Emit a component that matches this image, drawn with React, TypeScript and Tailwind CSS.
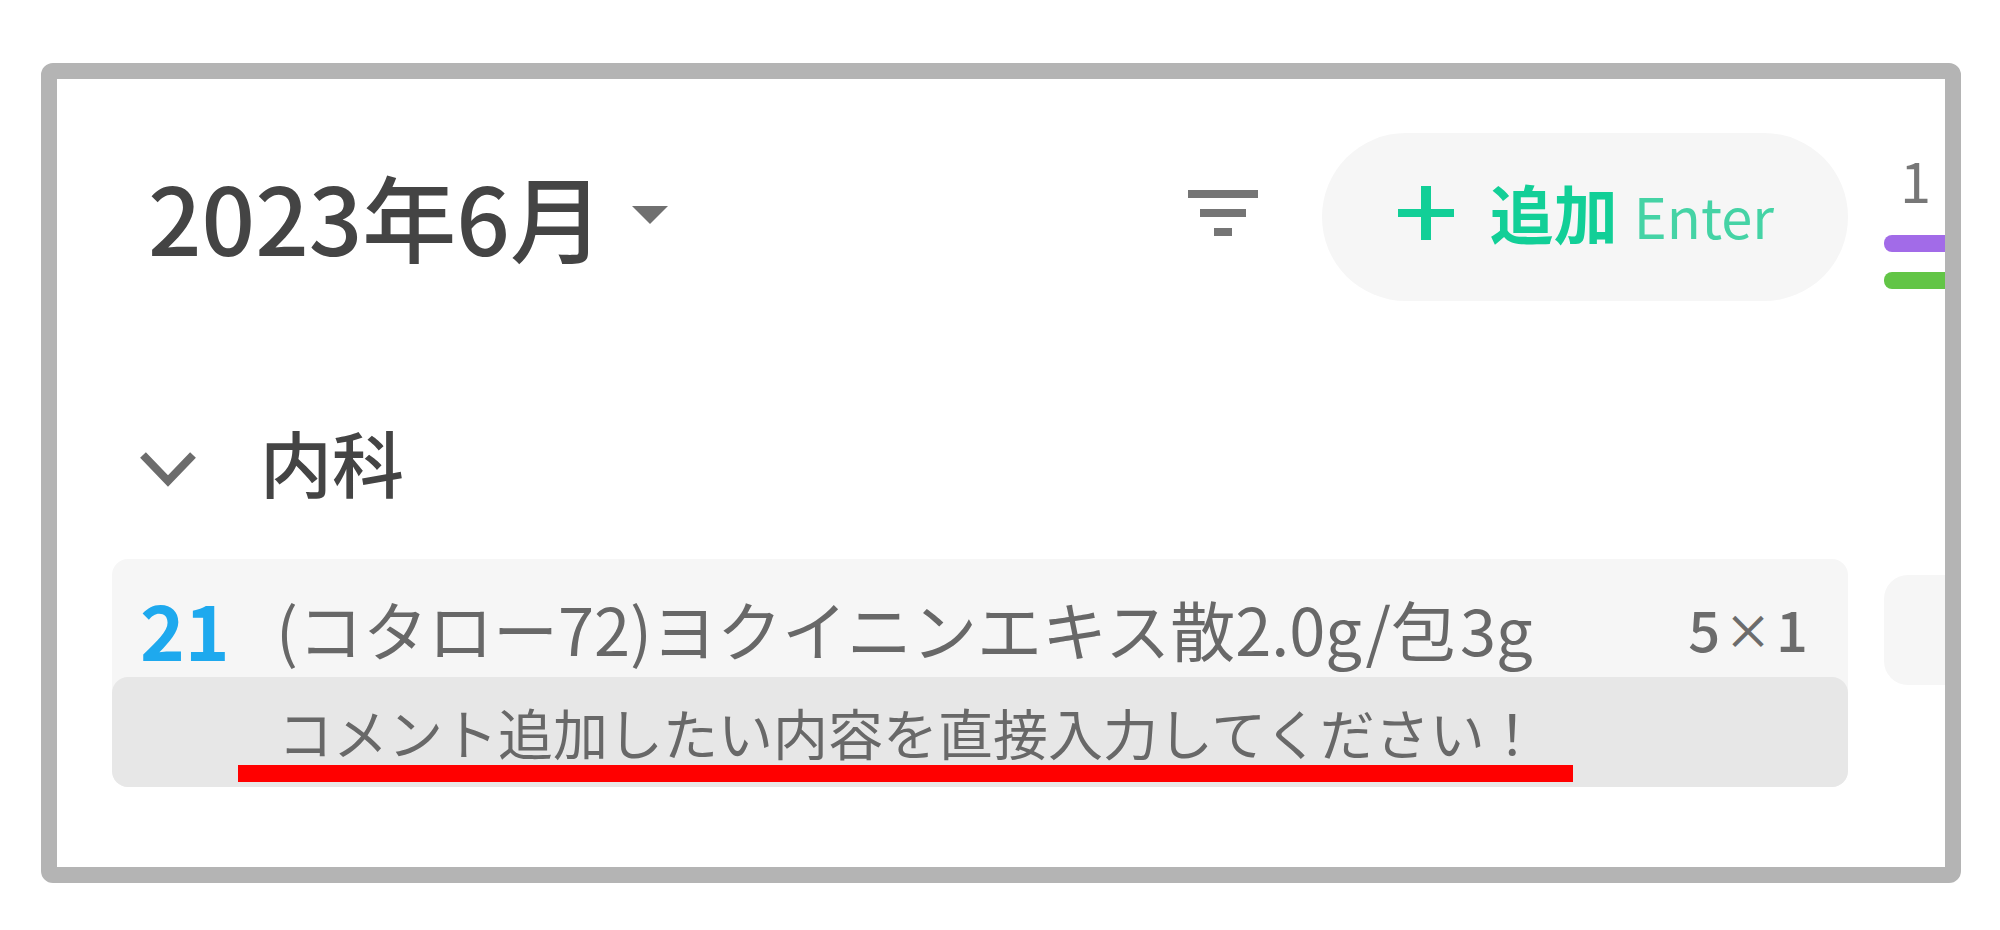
import React, { useState } from 'react';

const months = ['2023年6月', '2023年5月', '2023年4月'];

function FilterIcon() {
  return (
    <svg width="70" height="48" viewBox="0 0 70 48" fill="#757575" aria-hidden="true">
      <rect x="0" y="1" width="70" height="8" />
      <rect x="12" y="20" width="46" height="8" />
      <rect x="26" y="39" width="18" height="8" />
    </svg>
  );
}

function PlusIcon() {
  return (
    <svg width="56" height="56" viewBox="0 0 56 56" fill="#12cf97" aria-hidden="true">
      <rect x="23" y="1" width="10" height="54" />
      <rect x="0" y="24" width="56" height="8" />
    </svg>
  );
}

function Header() {
  const [month, setMonth] = useState(months[0]);

  return (
    <header className="flex h-[168px] items-center">
      <label className="flex items-center gap-7 pb-1 pl-9">
        <select
          aria-label="診療月"
          value={month}
          onChange={(e) => setMonth(e.target.value)}
          className="h-32 appearance-none bg-transparent text-[94px] leading-[128px] font-medium text-[#444] outline-none"
        >
          {months.map((m) => (
            <option key={m}>{m}</option>
          ))}
        </select>
        <svg width="36" height="18" viewBox="0 0 36 18" fill="#707070" aria-hidden="true">
          <path d="M0 0h36L18 18z" />
        </svg>
      </label>

      <div className="ml-auto flex items-center gap-16">
        <button aria-label="絞り込み" className="pb-2">
          <FilterIcon />
        </button>
        <button className="flex h-[168px] items-center rounded-full bg-[#f6f6f6] pr-[74px] pb-2 pl-[76px] text-[#12cf97]">
          <PlusIcon />
          <span className="ml-9 pb-1 text-[64px] font-bold">追加</span>
          <span className="ml-4 pt-1 text-[56px] text-[#45d3a5]">Enter</span>
        </button>
      </div>
    </header>
  );
}

function Prescription() {
  const [comment, setComment] = useState('コメント追加したい内容を直接入力してください！');

  return (
    <div className="rounded-2xl bg-[#f6f6f6]">
      <div className="flex h-[118px] items-center pt-6 pr-10 pb-1 pl-7">
        <span className="w-[136px] text-[76px] leading-[86px] font-bold text-[#1ea9ee]">21</span>
        <span className="flex gap-1 text-[65px] leading-[86px] text-[#686868]">
          <span>(コタロー72)ヨクイニンエキス散2.0g/包</span>
          <span>3g</span>
        </span>
        <span className="ml-auto flex items-center gap-1 text-[56px] leading-[86px] font-medium text-[#6c6c6c]">
          5<span className="text-5xl">×</span>1
        </span>
      </div>
      <div className="rounded-2xl bg-[#e7e7e7] pt-5 pr-10 pb-[5px] pl-[126px]">
        <input
          type="text"
          aria-label="コメント"
          value={comment}
          onChange={(e) => setComment(e.target.value)}
          className="block h-[68px] w-full bg-transparent pl-10 text-[55px] leading-[68px] text-[#686868] outline-none"
        />
        <div className="h-[17px] w-[85%] bg-[#ff0000]" />
      </div>
    </div>
  );
}

export default function App() {
  const [open, setOpen] = useState(true);

  return (
    <div className="bg-white py-[63px] pr-[39px] pl-[41px] font-['Noto_Sans_CJK_JP',sans-serif]">
      <main className="flex overflow-hidden rounded-xl border-[16px] border-[#b4b4b4] bg-white">
        <section className="flex-1 pt-[54px] pr-9 pb-20 pl-[55px]">
          <Header />

          <h2 className="mt-28 mb-[42px] flex h-[104px] items-center pl-7">
            <button
              aria-label="内科"
              aria-expanded={open}
              onClick={() => setOpen(!open)}
              className="pt-2"
            >
              <svg width="56" height="36" viewBox="0 0 56 36" fill="none" stroke="#6c6c6c" strokeWidth="8" aria-hidden="true">
                <path d="M3 4l25 26L53 4" />
              </svg>
            </button>
            <span className="ml-16 pb-2 text-[72px] leading-[104px] font-medium text-[#444]">内科</span>
          </h2>

          {open && <Prescription />}
        </section>

        {/* next panel, cut off by the frame */}
        <aside className="w-[61px] pt-16">
          <div className="pl-4 text-[56px] leading-[72px] text-[#777]">1</div>
          <div className="mt-5 h-[17px] w-40 rounded-lg bg-[#a26be8]" />
          <div className="mt-5 h-[17px] w-40 rounded-lg bg-[#62c546]" />
          <div className="mt-[286px] h-[110px] w-40 rounded-3xl bg-[#f6f6f6]" />
        </aside>
      </main>
    </div>
  );
}
